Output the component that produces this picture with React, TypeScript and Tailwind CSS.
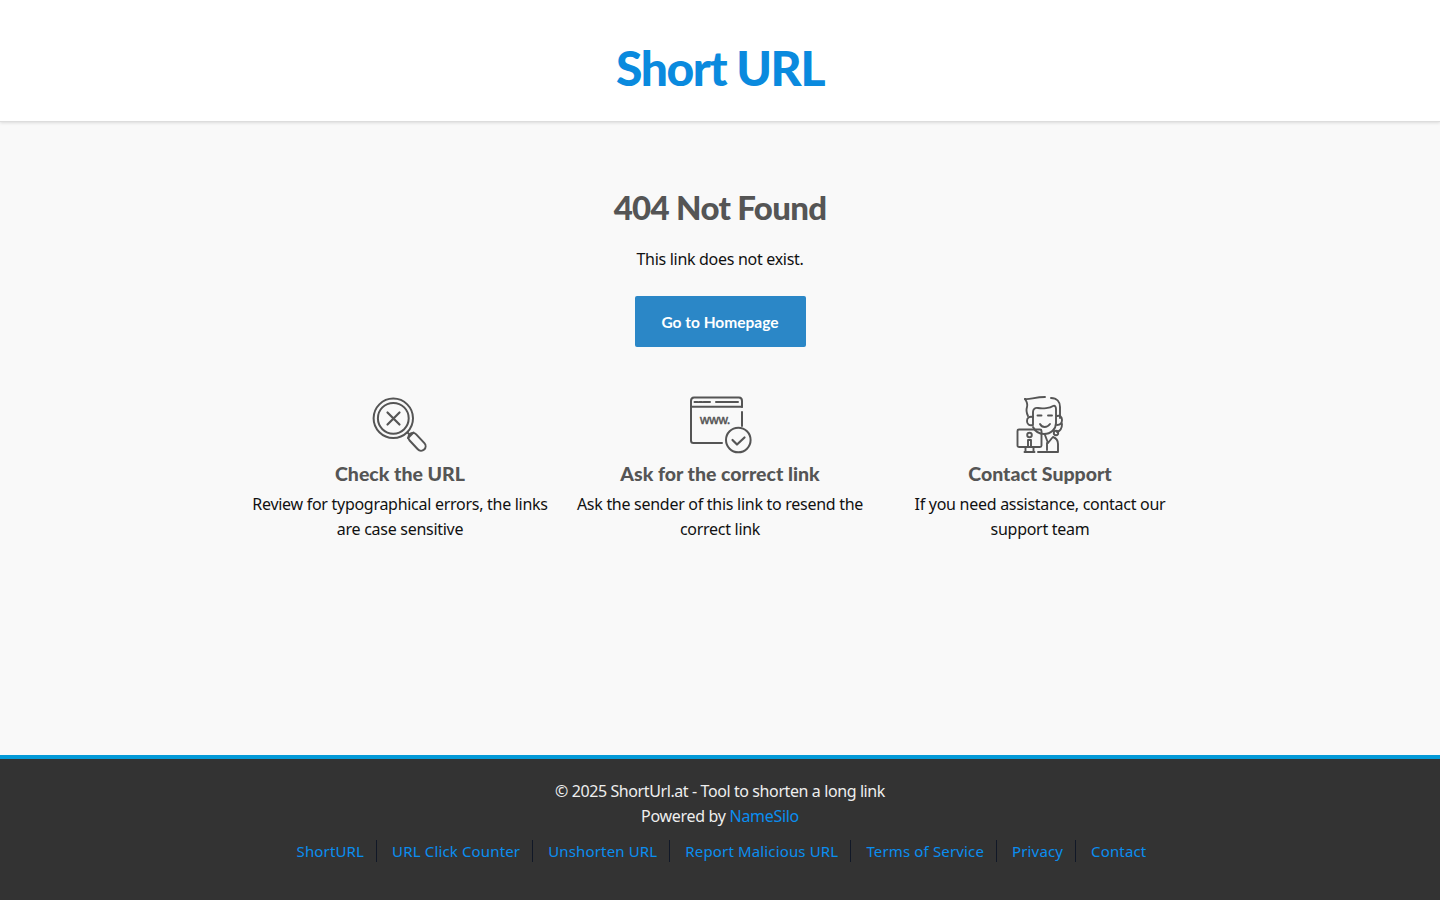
import React from 'react';

const SearchIcon = () => (
  <svg width="80" height="80" viewBox="0 0 80 80" fill="none" stroke="#555" strokeWidth="2" strokeLinecap="round" strokeLinejoin="round">
    <circle cx="33.300" cy="33.300" r="19.700" />
    <circle cx="33.300" cy="33.300" r="15.400" />
    <path d="M27.500 27.500l12 12M39.500 27.500l-12 12" strokeWidth="2.200" />
    <path d="M47.500 47.500l2.500 2.500" />
    <rect x="46.500" y="52.300" width="21" height="9" rx="4.500" transform="rotate(47 57 56.800)" />
    <path d="M48 53l5.500-5.500" />
  </svg>
);

const WwwIcon = () => (
  <svg width="80" height="80" viewBox="0 0 80 80" fill="none" stroke="#555" strokeWidth="2" strokeLinecap="round" strokeLinejoin="round">
    <path d="M42 58H13.500c-1.500 0-2.500-1-2.500-2.500V16c0-2 1-3.500 3-3.500h45c2 0 3 1.500 3 3.500v6M62 27v14" />
    <path d="M11 21.700h51" />
    <path d="M14.500 17h3M19 17h3M23.500 17h3M27.500 17h2.500M36 17h22" />
    <circle cx="58.300" cy="55" r="12.300" />
    <path d="M52.500 55l4.500 4.500 7.500-7" strokeWidth="2.200" />
    <text x="20" y="38.500" fontFamily="'Liberation Sans', sans-serif" fontSize="13" fontWeight="400" fill="#555" stroke="#555" strokeWidth="0.5" letterSpacing="-0.2">www.</text>
  </svg>
);

const SupportIcon = () => (
  <svg width="80" height="80" viewBox="0 0 80 80" fill="none" stroke="#555" strokeWidth="1.9" strokeLinecap="round" strokeLinejoin="round">
    <path d="M25 14c4 1 10-2 20-2M51 13c6 0 9 4 9 9v11" />
    <path d="M25 14c2 3 3 5 2 8-1 3 0 7 1 9" />
    <path d="M33 39V27c0-3 2-4.500 5-4 5 1 12 0 15-2 2-1 3 1 3 3v14c0 6-5 11-12 11-5 0-9-3-11-7" />
    <path d="M33 32c-4-1-6 1-6 4s2 5 6 4" />
    <path d="M57 31c3-1 5 1 5 4 0 3-2 5-5 5" />
    <path d="M37.500 30.500h4M48 30.500h4" />
    <path d="M40 39c2 4 7 4 10 0" />
    <path d="M62 39c0 4-2 7-5 8" />
    <circle cx="56" cy="48" r="2.200" />
    <path d="M45 50l3 8 4-5M53 52c3 1 5 3 5 7v8H38" />
    <path d="M47 58v7" />
    <rect x="17.500" y="44.500" width="24" height="17.500" rx="1.500" />
    <circle cx="29.500" cy="50" r="2.300" />
    <path d="M28 55h3v7h-3zM24.500 67h10" />
    <path d="M25.500 62v5M33.500 62v5" />
  </svg>
);

const features = [
  { icon: <SearchIcon />, title: 'Check the URL', text: 'Review for typographical errors, the links are case sensitive' },
  { icon: <WwwIcon />, title: 'Ask for the correct link', text: 'Ask the sender of this link to resend the correct link' },
  { icon: <SupportIcon />, title: 'Contact Support', text: 'If you need assistance, contact our support team' },
];

const links = ['ShortURL', 'URL Click Counter', 'Unshorten URL', 'Report Malicious URL', 'Terms of Service', 'Privacy', 'Contact'];

export default function App() {
  return (
    <div className="h-[900px] flex flex-col bg-[#f9f9f9] font-['Noto_Sans',sans-serif] text-[#111]">
      {/* Header */}
      <header className="h-[122px] bg-white border-b border-[#ddd] shadow-[0_1px_3px_rgba(0,0,0,0.12)] flex justify-center pt-[38px]">
        <div className="font-['Lato',sans-serif] font-black text-[#0a8ade] text-[48px] leading-[60px] tracking-[-1.4px]">Short URL</div>
      </header>

      <main className="flex-1 flex flex-col items-center pt-[63px]">
        <h1 className="font-['Lato',sans-serif] font-black text-[#555] text-[33px] leading-[44px] tracking-[-0.7px]">404 Not Found</h1>
        <p className="mt-[18px] text-[16px] leading-[25px] tracking-[-0.3px]">This link does not exist.</p>
        <button className="mt-[24px] w-[171px] h-[51px] bg-[#2b87c7] rounded-[2px] text-white font-['Lato',sans-serif] font-bold text-[15.500px] leading-[50px]">Go to Homepage</button>

        <div className="mt-[43px] grid grid-cols-3 w-[960px]">
          {features.map(f => (
            <div key={f.title} className="flex flex-col items-center text-center px-[10px]">
              <div className="h-[70px] flex items-center justify-center">{f.icon}</div>
              <h3 className="-mt-[1px] font-['Lato',sans-serif] font-black text-[#555] text-[19.500px] leading-[30px]">{f.title}</h3>
              <p className="mt-[3px] text-[16px] leading-[25px] tracking-[-0.28px]">{f.text}</p>
            </div>
          ))}
        </div>
      </main>

      {/* Footer */}
      <footer className="h-[145px] bg-[#333] border-t-[4px] border-[#039ad8] text-[#eee] text-center pt-[20px] text-[16px] leading-[25px]">
        <div className="tracking-[-0.4px]">© 2025 ShortUrl.at - Tool to shorten a long link</div>
        <div className="tracking-[-0.3px]">Powered by <a className="text-[#0a8ef0]">NameSilo</a></div>
        <div className="mt-[11px] flex justify-center text-[15px] tracking-[0.15px]">
          {links.map((l, i) => (
            <a key={l} className={`text-[#0a8ef0] pl-[15px] pr-[12px] h-[22px] leading-[22px] ${i < links.length - 1 ? 'border-r border-[#111827]' : ''}`}>{l}</a>
          ))}
        </div>
      </footer>
    </div>
  );
}
